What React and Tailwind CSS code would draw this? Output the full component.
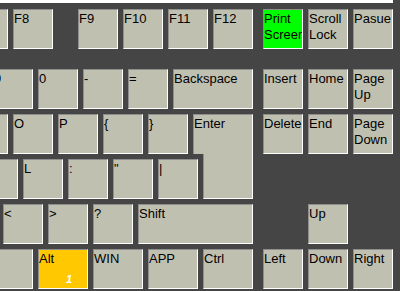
import React from "react";

const font = { fontFamily: '"Liberation Sans", Arial, sans-serif' };

function Key({ label, w = "w-[40px]", face = "bg-[#c0c0b1]", extra = "", children }) {
  return (
    <div
      className={`${w} h-[40px] shrink-0 ${face} border border-t-[#8e8e8e] border-l-[#8e8e8e] border-r-white border-b-white overflow-hidden relative text-[13px] leading-[16px] text-black pt-[1px] ${extra}`}
    >
      {label}
      {children}
    </div>
  );
}

export default function App() {
  return (
    <div className="w-[400px] h-[291px] bg-[#454545] overflow-hidden" style={font}>
      <div className="h-[3px] w-[393px] bg-white" />

      {/* function row */}
      <div className="flex gap-[5px] mt-[6px] ml-[-32px]">
        <Key label="F7" />
        <Key label="F8" />
        <Key label="F9" extra="ml-[20px]" />
        <Key label="F10" />
        <Key label="F11" />
        <Key label="F12" />
        <Key label="Print Screen" face="bg-[#00ff00]" extra="ml-[5px]" />
        <Key label="Scroll Lock" />
        <Key label="Pasue" />
      </div>

      {/* number row */}
      <div className="flex gap-[5px] mt-[20px] ml-[-7px]">
        <Key label="9" />
        <Key label="0" />
        <Key label="-" />
        <Key label="=" />
        <Key label="Backspace" w="w-[80px]" />
        <Key label="Insert" extra="ml-[5px]" />
        <Key label="Home" />
        <Key label="Page Up" />
      </div>

      {/* qwerty row */}
      <div className="flex gap-[5px] mt-[5px] ml-[-32px]">
        <Key label="I" />
        <Key label="O" />
        <Key label="P" />
        <Key label="{" />
        <Key label="}" />
        <Key label="Enter" w="w-[60px]" extra="border-b-0" />
        <Key label="Delete" extra="ml-[5px]" />
        <Key label="End" />
        <Key label="Page Down" />
      </div>

      {/* home row */}
      <div className="flex items-start gap-[5px] mt-[5px] ml-[-22px]">
        <Key label="K" />
        <Key label="L" />
        <Key label=":" />
        <Key label={'"'} />
        <Key label="|" />
        <div className="w-[50px] h-[46px] -mt-[6px] shrink-0 bg-[#c0c0b1] border-l border-l-[#8e8e8e] border-r border-r-white border-b border-b-white" />
      </div>

      {/* shift row */}
      <div className="flex gap-[5px] mt-[5px] ml-[3px]">
        <Key label="<" />
        <Key label=">" />
        <Key label="?" />
        <Key label="Shift" w="w-[115px]" />
        <Key label="Up" extra="ml-[50px]" />
      </div>

      {/* bottom row */}
      <div className="flex gap-[5px] mt-[5px] ml-[-57px]">
        <Key label="Ctrl" w="w-[90px]" />
        <Key label="Alt" w="w-[50px]" face="bg-[#ffc800]">
          <span className="absolute left-[27px] top-[21px] text-[11px] font-bold text-white italic">1</span>
        </Key>
        <Key label="WIN" w="w-[50px]" />
        <Key label="APP" w="w-[50px]" />
        <Key label="Ctrl" w="w-[50px]" />
        <Key label="Left" extra="ml-[5px]" />
        <Key label="Down" />
        <Key label="Right" />
      </div>
    </div>
  );
}
